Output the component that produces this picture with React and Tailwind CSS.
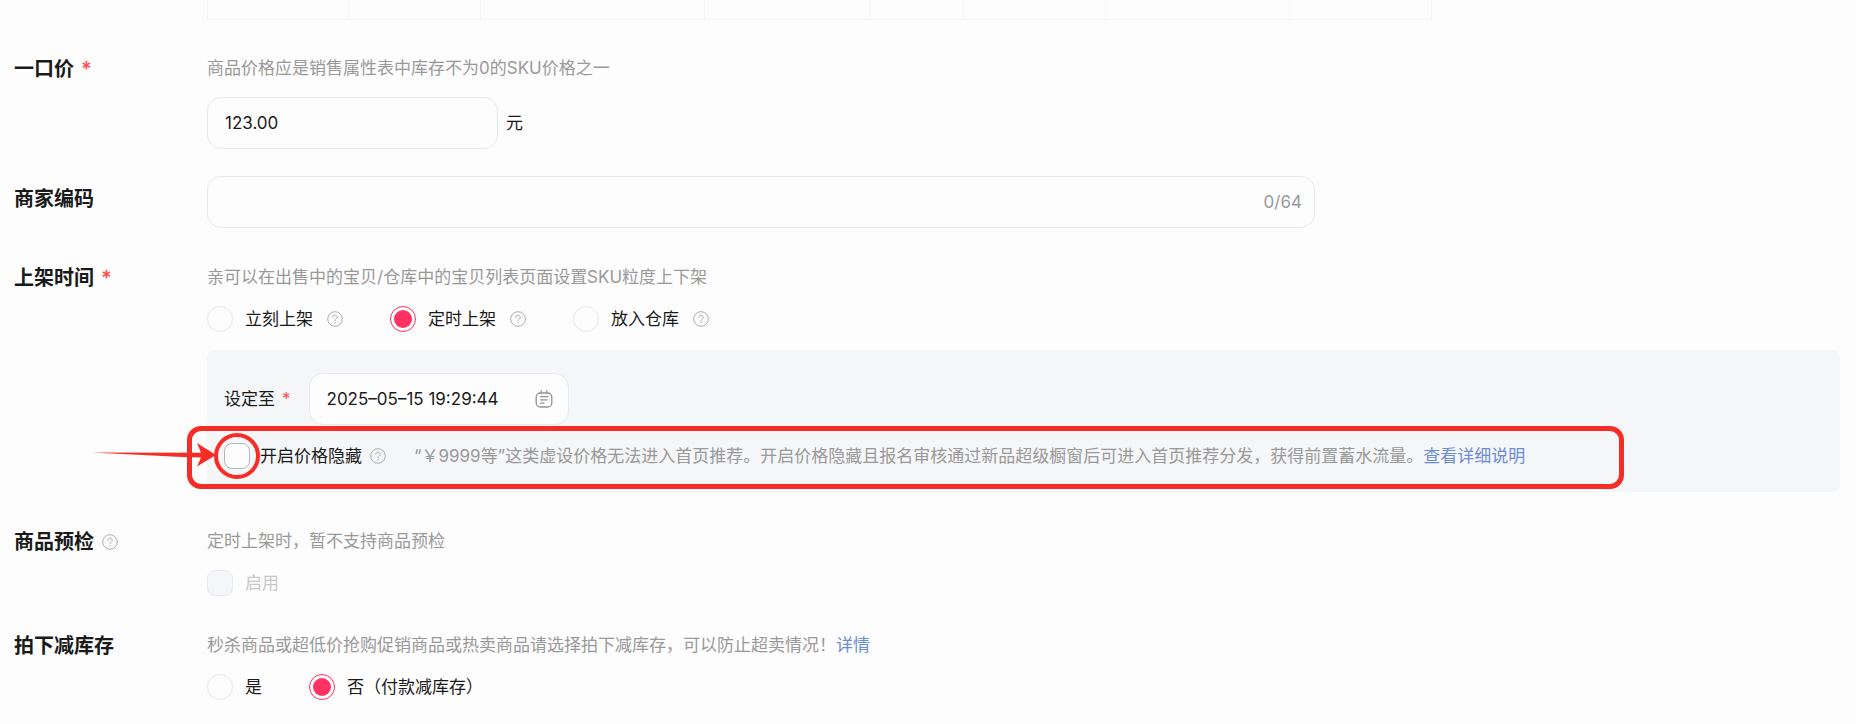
import React, { useState } from "react";

const skuColumns = [
  { id: "c1", width: "w-[141px]" },
  { id: "c2", width: "w-[132px]" },
  { id: "c3", width: "w-[224px]" },
  { id: "c4", width: "w-[165px]" },
  { id: "c5", width: "w-[94px]" },
  { id: "c6", width: "w-[142px]" },
  { id: "c7", width: "w-[184px]" },
  { id: "c8", width: "w-[142px]" },
];

const shelfOptions = [
  { value: "now", label: "立刻上架" },
  { value: "timed", label: "定时上架" },
  { value: "warehouse", label: "放入仓库" },
];

const HelpIcon = () => (
  <svg className="w-4 h-4 shrink-0" viewBox="0 0 16 16" fill="none" stroke="#adadad">
    <circle cx="8" cy="8" r="7.3" strokeWidth="1" />
    <path
      d="M5.8 6.3c0-1.3.9-2.1 2.2-2.1s2.2.8 2.2 2c0 .9-.5 1.4-1.1 1.9-.7.5-1.1.9-1.1 1.7"
      strokeWidth="1"
      strokeLinecap="round"
    />
    <circle cx="8" cy="11.8" r="0.7" fill="#adadad" stroke="none" />
  </svg>
);

const CalendarIcon = () => (
  <svg className="w-[18px] h-5 shrink-0" viewBox="0 0 18 20" fill="none" stroke="#949494" strokeWidth="1.3" strokeLinecap="round">
    <rect x="1.2" y="4" width="15.6" height="14" rx="4" />
    <path d="M6.2 1.7v2.1M11.8 1.7v2.1M5.6 7.6h7.4M5.6 10.9h6.6M5.6 14.2h3.4" />
  </svg>
);

const Required = () => <span className="text-[#ff4d4f] ml-[7px]">*</span>;

const Hint = ({ children }) => (
  <p className="text-[17px] leading-6 text-[#999999]">{children}</p>
);

const Row = ({ label, htmlFor, required, help, middle, children }) => (
  <div className="flex items-start">
    <div
      className={`w-[193px] shrink-0 flex items-center text-[20px] leading-[26px] font-semibold ${
        middle ? "pt-[10px]" : ""
      }`}
    >
      {htmlFor ? <label htmlFor={htmlFor}>{label}</label> : <span>{label}</span>}
      {required && <Required />}
      {help && (
        <span className="ml-2">
          <HelpIcon />
        </span>
      )}
    </div>
    <div className="flex-1 min-w-0">{children}</div>
  </div>
);

const Radio = ({ name, value, label, checked, onChange, help }) => (
  <div className="flex items-center">
    <label className="flex items-center gap-3 cursor-pointer">
      <input
        type="radio"
        name={name}
        value={value}
        checked={checked}
        onChange={() => onChange(value)}
        className="appearance-none w-[26px] h-[26px] shrink-0 rounded-full border border-[#e6e7ef] p-[3px] bg-clip-content checked:border-[#ff3261] checked:bg-[#ff3261]"
      />
      {label}
    </label>
    {help && (
      <span className="ml-[14px]">
        <HelpIcon />
      </span>
    )}
  </div>
);

const App = () => {
  const [price, setPrice] = useState("123.00");
  const [code, setCode] = useState("");
  const [shelfTime, setShelfTime] = useState("timed");
  const [date, setDate] = useState("2025–05–15 19:29:44");
  const [hidePrice, setHidePrice] = useState(false);
  const [reduceStock, setReduceStock] = useState("no");

  return (
    <div className="min-h-screen bg-[#fdfdfd] pl-[14px] pr-4 pb-6 text-[17px] leading-6 text-[#1a1a1a] font-['Inter','Noto_Sans_CJK_SC',sans-serif]">
      {/* Bottom edge of the SKU table */}
      <div className="ml-[193px] h-5 w-fit flex border-b border-l border-[#f5f5f6]">
        {skuColumns.map((col) => (
          <div key={col.id} className={`${col.width} border-r border-[#f5f5f6]`} />
        ))}
      </div>

      <div className="mt-9">
        <Row label="一口价" htmlFor="price" required>
          <Hint>商品价格应是销售属性表中库存不为0的SKU价格之一</Hint>
          <div className="mt-[17px] flex items-center gap-2">
            <input
              id="price"
              type="text"
              value={price}
              onChange={(e) => setPrice(e.target.value)}
              className="w-[291px] h-[52px] rounded-[14px] border border-[#e8e8ef] px-[17px] outline-none"
            />
            <span>元</span>
          </div>
        </Row>
      </div>

      <div className="mt-[27px]">
        <Row label="商家编码" htmlFor="code" middle>
          <div className="max-w-[1108px] h-[52px] flex items-center rounded-[14px] border border-[#e8e8ef] px-3">
            <input
              id="code"
              type="text"
              maxLength={64}
              value={code}
              onChange={(e) => setCode(e.target.value)}
              className="flex-1 min-w-0 h-full px-1 outline-none"
            />
            <span className="text-[#999999]">{code.length}/64</span>
          </div>
        </Row>
      </div>

      <div className="mt-[37px]">
        <Row label="上架时间" required>
          <Hint>亲可以在出售中的宝贝/仓库中的宝贝列表页面设置SKU粒度上下架</Hint>
          <div className="mt-[17px] flex items-center gap-[47px]">
            {shelfOptions.map((option) => (
              <Radio
                key={option.value}
                name="shelfTime"
                value={option.value}
                label={option.label}
                checked={shelfTime === option.value}
                onChange={setShelfTime}
                help
              />
            ))}
          </div>

          <div className="mt-[18px] rounded-lg bg-[#f5f6f8] px-[17px] py-[23px]">
            <div className="flex items-center">
              <label htmlFor="date">设定至</label>
              <Required />
              <div className="ml-[18px] w-[260px] h-[52px] flex items-center rounded-[14px] border border-[#e8e8ef] bg-[#fdfdfd] pl-[17px] pr-[15px]">
                <input
                  id="date"
                  type="text"
                  value={date}
                  onChange={(e) => setDate(e.target.value)}
                  className="flex-1 min-w-0 outline-none"
                />
                <CalendarIcon />
              </div>
            </div>

            <div className="relative mt-[18px] flex items-center">
              <label className="flex items-center gap-[10px] shrink-0 cursor-pointer">
                <input
                  type="checkbox"
                  checked={hidePrice}
                  onChange={(e) => setHidePrice(e.target.checked)}
                  className="appearance-none w-[26px] h-[26px] shrink-0 rounded-lg border border-[#b4b6c4] bg-[#fdfdfd] checked:bg-[#ff3261]"
                />
                开启价格隐藏
              </label>
              <span className="ml-2">
                <HelpIcon />
              </span>
              <div className="ml-7">
                <Hint>
                  “￥9999等”这类虚设价格无法进入首页推荐。开启价格隐藏且报名审核通过新品超级橱窗后可进入首页推荐分发，获得前置蓄水流量。
                  <a href="#detail" className="text-[#6c8cd5]">
                    查看详细说明
                  </a>
                </Hint>
              </div>

              {/* Highlight drawn over the price hiding option */}
              <div className="absolute -left-[37px] -top-[17px] w-[1437px] h-[63px] rounded-[14px] border-5 border-[#f62d26] pointer-events-none" />
              <svg
                className="absolute -left-[132px] -top-[11px] w-[170px] h-12 pointer-events-none"
                viewBox="0 0 170 48"
              >
                <circle cx="145" cy="24" r="21" fill="none" stroke="#f62d26" strokeWidth="4" />
                <path d="M0 20.5L108 20.7L109 20.8L105 11L124 23L105 34.5L109 25.5L90 25Z" fill="#f62d26" />
              </svg>
            </div>
          </div>
        </Row>
      </div>

      <div className="mt-[37px]">
        <Row label="商品预检" help>
          <Hint>定时上架时，暂不支持商品预检</Hint>
          <label className="mt-[17px] w-fit flex items-center gap-3 text-[#c8c8c8]">
            <input
              type="checkbox"
              disabled
              className="appearance-none w-[26px] h-[26px] shrink-0 rounded-lg border border-[#e8e9f1] bg-[#f5f6f9]"
            />
            启用
          </label>
        </Row>
      </div>

      <div className="mt-[37px]">
        <Row label="拍下减库存">
          <Hint>
            秒杀商品或超低价抢购促销商品或热卖商品请选择拍下减库存，可以防止超卖情况！
            <a href="#stock" className="text-[#6c8cd5]">
              详情
            </a>
          </Hint>
          <div className="mt-[17px] flex items-center gap-[47px]">
            <Radio
              name="reduceStock"
              value="yes"
              label="是"
              checked={reduceStock === "yes"}
              onChange={setReduceStock}
            />
            <Radio
              name="reduceStock"
              value="no"
              label="否（付款减库存）"
              checked={reduceStock === "no"}
              onChange={setReduceStock}
            />
          </div>
        </Row>
      </div>
    </div>
  );
};

export default App;
